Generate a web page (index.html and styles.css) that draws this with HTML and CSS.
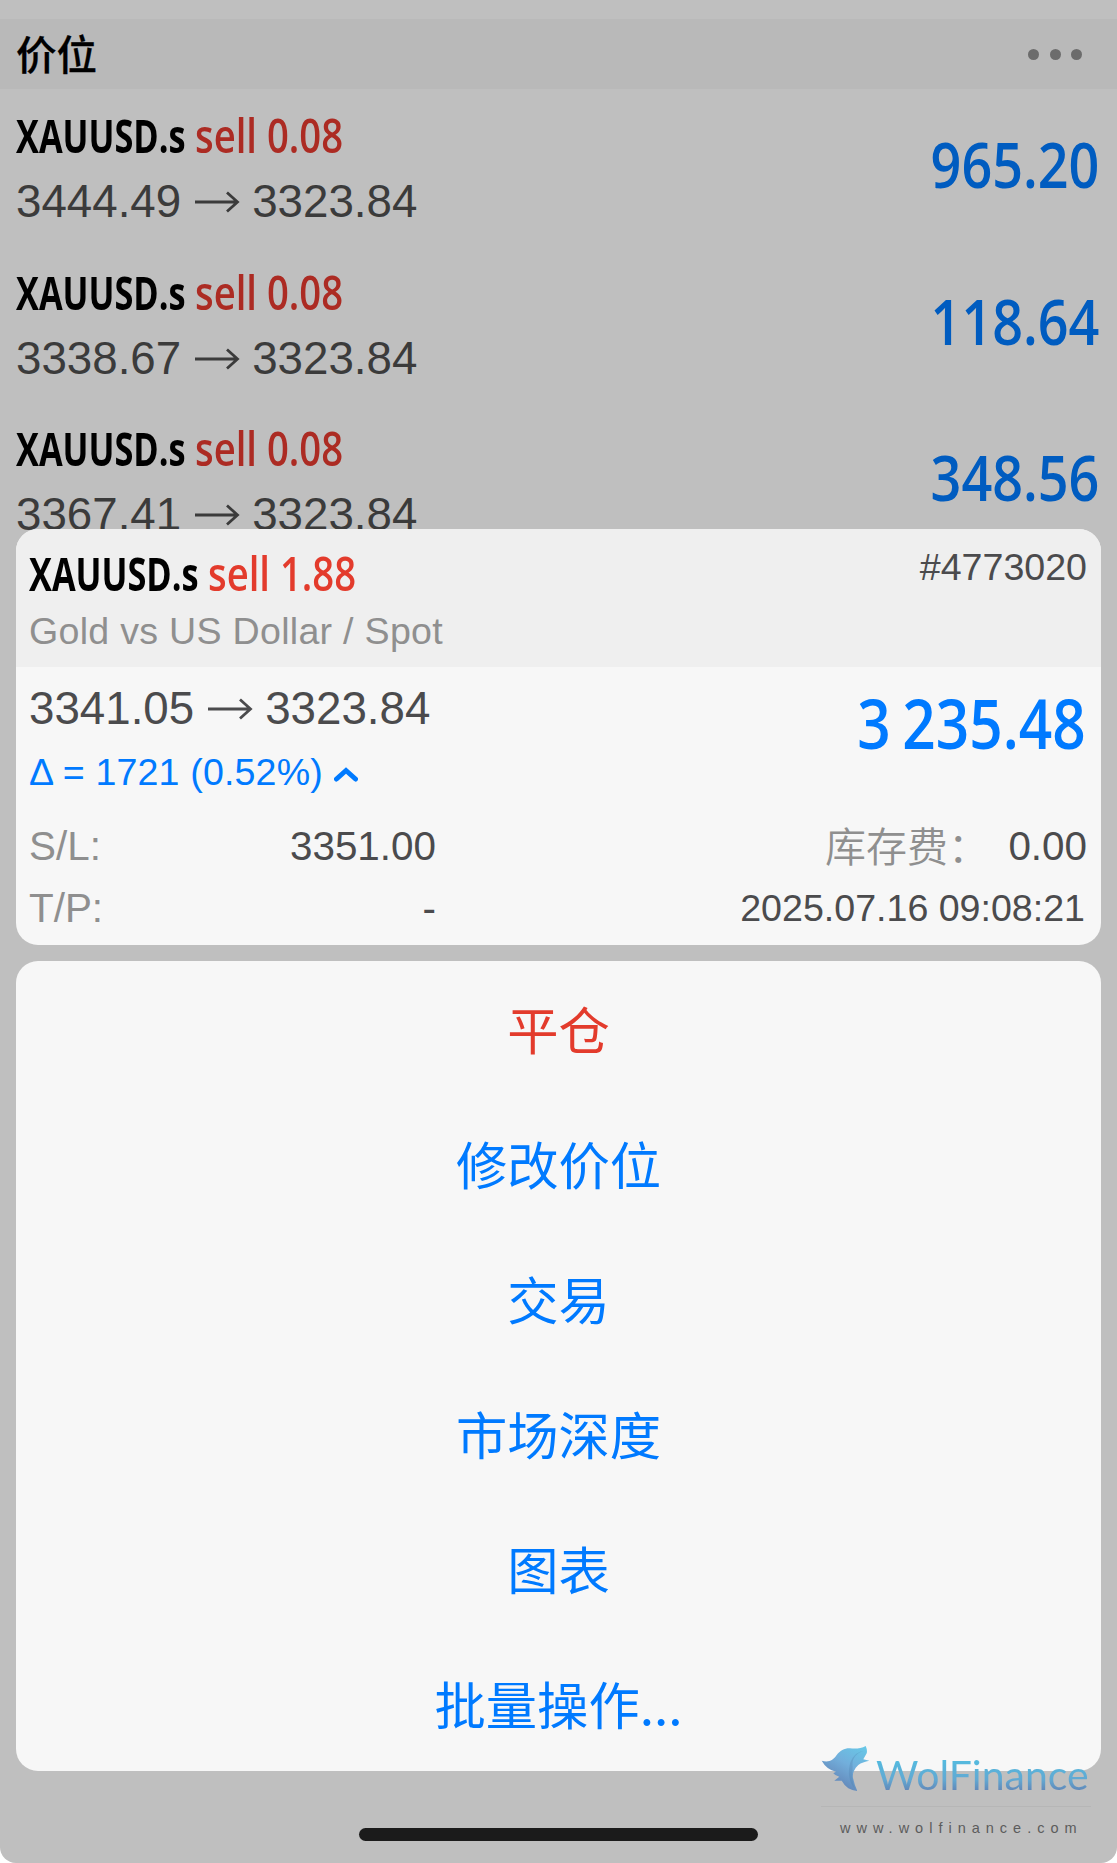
FILE: index.html
```html
<!DOCTYPE html>
<html lang="zh-CN">
<head>
<meta charset="utf-8">
<title>价位</title>
<link rel="stylesheet" href="styles.css">
</head>
<body>
<svg width="0" height="0" class="defs"><symbol id="arrow" viewBox="0 0 46 24"><path d="M1 12H43M33 2.500L43.500 12L33 21.500" fill="none" stroke="currentColor" stroke-width="2.800"/></symbol></svg>
<div class="phone">
  <header class="bar"><h1>价位</h1><div class="dots"><i></i><i></i><i></i></div></header>
  <main class="positions">
    <section class="position"><div><div class="name"><b>XAUUSD.s</b><em>sell 0.08</em></div><div class="price">3444.49<svg><use href="#arrow"/></svg>3323.84</div></div><strong class="profit">965.20</strong></section>
    <section class="position"><div><div class="name"><b>XAUUSD.s</b><em>sell 0.08</em></div><div class="price">3338.67<svg><use href="#arrow"/></svg>3323.84</div></div><strong class="profit">118.64</strong></section>
    <section class="position"><div><div class="name"><b>XAUUSD.s</b><em>sell 0.08</em></div><div class="price">3367.41<svg><use href="#arrow"/></svg>3323.84</div></div><strong class="profit">348.56</strong></section>
  </main>
  <div class="sheet">
    <section class="card">
      <div class="card-head">
        <div><div class="name"><b>XAUUSD.s</b><em>sell 1.88</em></div><div class="desc">Gold vs US Dollar / Spot</div></div>
        <div class="ticket">#4773020</div>
      </div>
      <div class="card-main">
        <div><div class="price">3341.05<svg><use href="#arrow"/></svg>3323.84</div>
        <div class="delta"><span>Δ = 1721 (0.52%)</span><svg class="chevron" viewBox="0 0 24 16"><path d="M2.500 13L12 4.500L21.500 13" fill="none" stroke="currentColor" stroke-width="5" stroke-linecap="round"/></svg></div></div>
        <strong class="total">3 235.48</strong>
      </div>
      <div class="details">
        <span class="label">S/L:</span><span class="value">3351.00</span><span class="swap">库存费：</span><span class="value">0.00</span>
      </div>
      <div class="details last">
        <span class="label">T/P:</span><span class="value">-</span><span class="date">2025.07.16 09:08:21</span>
      </div>
    </section>
    <nav class="menu">
      <a class="danger">平仓</a><a>修改价位</a><a>交易</a><a>市场深度</a><a>图表</a><a>批量操作<span class="ellipsis">...</span></a>
    </nav>
  </div>
  <div class="home"></div>
  <div class="brand">
    <div class="brand-row">
      <svg class="wolf" viewBox="0 0 50 48"><defs><linearGradient id="fur" x1="1" y1="0" x2=".4" y2="1"><stop offset="0" stop-color="#66cbe9"/><stop offset=".5" stop-color="#72aedb"/><stop offset="1" stop-color="#6181b3"/></linearGradient></defs>
      <path fill="url(#fur)" d="M.7 15.700C8 18 12 15 15.700 10C19 5.500 24 3 29 3.300C33 3.700 40 4 44.700 1Q46.500 5 45.700 8.300L42.300 14.300L48.300 15.700C44 17 40 17.500 37.300 20C32 25 31 31 32.300 34Q33.500 40 36.300 46Q31 45.500 27.300 43.300Q23 40 20.700 35.700L13.300 35.700L18.300 31.700Q14.500 31 12.300 28.300L15 26.700Q5.500 24.500 .7 15.700Z"/>
      <path fill="#4d7fab" opacity=".3" d="M42.500 6C35 8 31 14 31.500 20C32 26 30 35 34 44C28 37 27 29 28.500 21C30 13 35 7 42.500 6Z"/></svg>
      <span class="wordmark">WolFinance</span>
    </div>
    <div class="site">www.wolfinance.com</div>
  </div>
</div>
</body>
</html>
```
FILE: styles.css
```css
* { box-sizing: border-box; }
body { margin: 0; background: #fff; font-family: "Liberation Sans", "Noto Sans CJK SC", sans-serif; }
.defs { position: absolute; }
.phone { position: relative; width: 1117px; height: 1863px; padding-top: 19px; overflow: hidden; background: #bfbfbf; border-radius: 0 0 16px 16px; }
.bar { display: flex; justify-content: space-between; align-items: center; height: 70px; padding: 0 35px 0 16px; background: #b9b9b9; }
.bar h1 { margin: 0; font: 500 40.500px/68px "Noto Sans CJK SC", sans-serif; height: 70px; color: #000; -webkit-text-stroke: .3px #000; }
.dots { display: flex; gap: 10.500px; }
.dots i { width: 11px; height: 11px; border-radius: 50%; background: #6c6c6c; }
.position { display: flex; justify-content: space-between; height: 156.700px; padding: 14px 18px 0 16px; }
.name { display: flex; height: 64px; font: 700 46.500px/64px "Open Sans", sans-serif; white-space: nowrap; }
.name b, .name em { display: block; font: inherit; transform-origin: 0 50%; }
.name b { width: 179px; color: #000; transform: scaleX(.738); }
.name em { font-weight: 650; color: #ac2b23; transform: scaleX(.823); }
.price { display: flex; align-items: center; height: 52px; font-size: 45.700px; line-height: 52px; color: #3b3b3b; }
.position .price { margin-top: 9px; }
.price svg { width: 46px; height: 24px; margin: 0 12.500px; }
.profit { height: 80px; margin-top: 21px; font: 650 63px/80px "Open Sans", sans-serif; color: #005cc0; transform-origin: 100% 50%; transform: scaleX(.855); }
.sheet { position: absolute; left: 16px; top: 529px; width: 1085px; display: grid; gap: 16px; }
.card { height: 416px; overflow: hidden; border-radius: 22px; background: #f7f7f7; }
.card-head { display: flex; justify-content: space-between; height: 138px; padding: 12px 14px 0 13px; background: #efefef; }
.card .name em { color: #e33b2c; }
.desc { font-size: 37.600px; line-height: 44px; margin-top: 4px; letter-spacing: .28px; color: #8f8f8f; white-space: nowrap; }
.ticket { font-size: 37.600px; line-height: 44px; margin-top: 4px; color: #4b4b4d; }
.card-main { display: flex; justify-content: space-between; height: 148px; padding: 16px 15px 0 13px; }
.card .price { color: #4b4b4d; }
.delta { display: flex; align-items: center; height: 44px; margin-top: 15px; font-size: 37.600px; line-height: 44px; letter-spacing: .15px; color: #007aff; }
.chevron { width: 24px; height: 16px; margin: 3px 0 0 11px; }
.total { height: 80px; font: 650 68px/80px "Open Sans", sans-serif; word-spacing: -4px; color: #007aff; transform-origin: 100% 50%; transform: scaleX(.86); }
.details { display: grid; grid-template-columns: 72px 335px 1fr 98px; height: 62px; padding: 0 14px 0 13px; font-size: 40.400px; line-height: 62px; color: #4b4b4d; }
.label { color: #8f8f8f; }
.value { text-align: right; }
.swap { text-align: right; font: 350 41px/59px "Noto Sans CJK SC", sans-serif; color: #8f8f8f; }
.last { grid-template-columns: 72px 335px 1fr; }
.date { text-align: right; font-size: 37.600px; padding-right: 2px; }
.menu { height: 810px; border-radius: 22px; background: #f7f7f7; }
.menu a { display: block; height: 135px; text-align: center; font: 400 51.300px/134px "Noto Sans CJK SC", sans-serif; color: #007aff; }
.menu .danger { color: #e33b2c; }
.home { position: absolute; left: 359px; top: 1828px; width: 399px; height: 13px; border-radius: 7px; background: #1b1b1b; }
.brand { position: absolute; left: 821px; top: 1745px; width: 270px; }
.brand-row { display: flex; height: 62px; border-bottom: 1px solid #b6b6b6; }
.wolf { width: 50px; height: 48px; flex: none; }
.wordmark { height: 50px; margin: 5px 0 0 5px; font: 400 41px/50px Lato, sans-serif; color: transparent; background: linear-gradient(#55b9de 25%, #62a8d2 60%, #6181b3 85%); background-clip: text; -webkit-background-clip: text; }
.site { padding: 12px 0 0 19px; font-size: 14.500px; line-height: 18px; letter-spacing: 6px; color: #5c5c5c; white-space: nowrap; }
```
